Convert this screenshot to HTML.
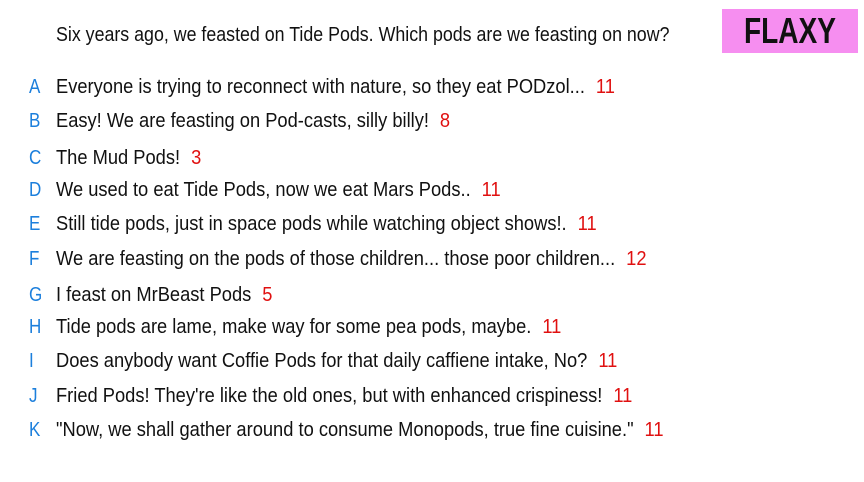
<!DOCTYPE html>
<html><head><meta charset="utf-8"><style>
body{margin:0;width:864px;height:482px;background:#fff;position:relative;overflow:hidden;font-family:"Liberation Sans",sans-serif;color:#111}
.r{position:absolute;left:0;font-size:20px;line-height:24px;white-space:nowrap}
.l{position:absolute;left:29px;color:#1c7fdc;transform:scaleX(0.85);transform-origin:left}
.t{position:absolute;left:56px;transform:scaleX(0.915);transform-origin:left}
.n{color:#e01010;margin-left:12px}
#q{position:absolute;left:56px;top:23px;font-size:20px;line-height:24px;white-space:nowrap;transform:scaleX(0.89);transform-origin:left}
#f{position:absolute;left:722px;top:9px;width:136px;height:44px;background:#f68ef0}
#f span{position:absolute;left:0;width:136px;text-align:center;font-size:36px;line-height:44px;font-weight:bold;color:#111;transform:scaleX(0.78);transform-origin:center}
</style></head><body>
<div id="q">Six years ago, we feasted on Tide Pods. Which pods are we feasting on now?</div>
<div id="f"><span>FLAXY</span></div>
<div class="r" style="top:75px"><span class="l">A</span><span class="t">Everyone is trying to reconnect with nature, so they eat PODzol...<span class="n">11</span></span></div>
<div class="r" style="top:109px"><span class="l">B</span><span class="t">Easy! We are feasting on Pod-casts, silly billy!<span class="n">8</span></span></div>
<div class="r" style="top:146px"><span class="l">C</span><span class="t">The Mud Pods!<span class="n">3</span></span></div>
<div class="r" style="top:178px"><span class="l">D</span><span class="t">We used to eat Tide Pods, now we eat Mars Pods..<span class="n">11</span></span></div>
<div class="r" style="top:212px"><span class="l">E</span><span class="t">Still tide pods, just in space pods while watching object shows!.<span class="n">11</span></span></div>
<div class="r" style="top:247px"><span class="l">F</span><span class="t">We are feasting on the pods of those children... those poor children...<span class="n">12</span></span></div>
<div class="r" style="top:283px"><span class="l">G</span><span class="t">I feast on MrBeast Pods<span class="n">5</span></span></div>
<div class="r" style="top:315px"><span class="l">H</span><span class="t">Tide pods are lame, make way for some pea pods, maybe.<span class="n">11</span></span></div>
<div class="r" style="top:349px"><span class="l">I</span><span class="t">Does anybody want Coffie Pods for that daily caffiene intake, No?<span class="n">11</span></span></div>
<div class="r" style="top:384px"><span class="l">J</span><span class="t">Fried Pods! They're like the old ones, but with enhanced crispiness!<span class="n">11</span></span></div>
<div class="r" style="top:418px"><span class="l">K</span><span class="t">"Now, we shall gather around to consume Monopods, true fine cuisine."<span class="n">11</span></span></div>
</body></html>
